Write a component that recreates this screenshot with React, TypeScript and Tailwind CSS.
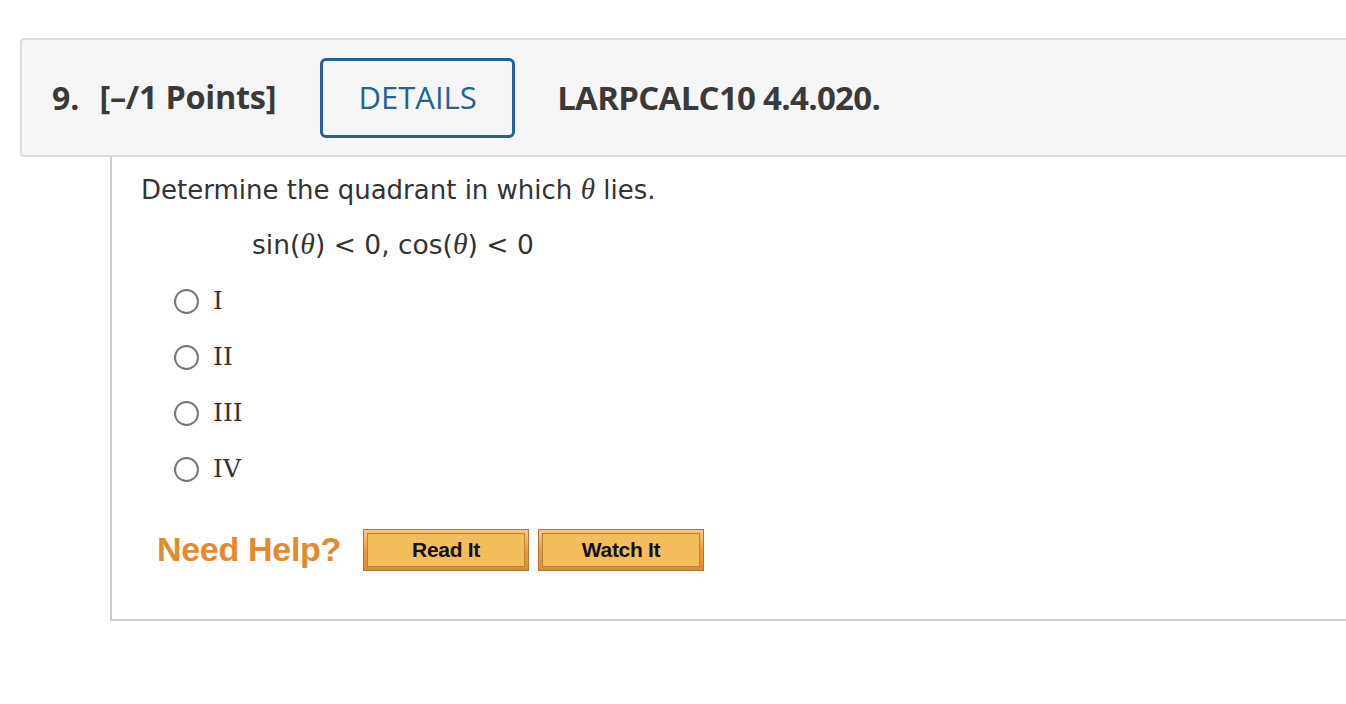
import React from 'react';

const options = ['I', 'II', 'III', 'IV'];

function Theta() {
  return <span className="font-['Liberation_Serif',serif] text-[1.12em] italic">θ</span>;
}

function HelpButton({ label }: { label: string }) {
  return (
    <button className="h-[42px] w-[166px] border border-[#b0763a] bg-gradient-to-b from-[#f7c98a] via-[#ec9a3e] to-[#e48a2f] p-[3px]">
      <span className="flex h-full w-full items-center justify-center border border-[#b8813f] bg-[#f3bd5b] font-['Liberation_Sans',Arial,sans-serif] text-[21px] font-bold tracking-[-0.3px] text-[#111]">
        {label}
      </span>
    </button>
  );
}

export default function App() {
  return (
    <div className="min-h-[704px] w-full overflow-hidden bg-white pl-[20px] pt-[38px]">
      <div className="flex h-[119px] w-[1340px] items-center rounded-l-[4px] border-2 border-r-0 border-[#dcdcdc] bg-[#f6f6f6] pl-[30px] font-['Open_Sans',sans-serif] text-[#3a3a3a]">
        <span className="text-[32px] font-bold">9.</span>
        <span className="ml-[20px] text-[32.5px] font-bold tracking-[-0.3px]">[–/1 Points]</span>
        <div className="ml-[44px] flex h-[80px] w-[195px] items-center justify-center rounded-[6px] border-[3px] border-[#24629a] text-[31px] text-[#24629a]">
          DETAILS
        </div>
        <span className="ml-[42px] text-[33px] font-bold tracking-[-0.7px]">LARPCALC10 4.4.020.</span>
      </div>

      <div className="ml-[90px] h-[464px] w-[1300px] border-b-2 border-l-2 border-[#cccccc] pl-[29px] pt-[16px] text-[#333]">
        <p className="font-['DejaVu_Sans',Verdana,sans-serif] text-[26px] leading-[32px]">
          Determine the quadrant in which <Theta /> lies.
        </p>
        <p className="mt-[22px] pl-[111px] font-['DejaVu_Sans',Verdana,sans-serif] text-[26.5px] leading-[32px]">
          sin(<Theta />) &lt; 0, cos(<Theta />) &lt; 0
        </p>

        <div className="mt-[24px] flex flex-col gap-[24px] pl-[33px]">
          {options.map((o) => (
            <label key={o} className="flex h-[32px] items-center gap-[14px]">
              <span className="h-[25px] w-[25px] rounded-full border-2 border-[#777] bg-white" />
              <span className="font-['DejaVu_Serif',serif] text-[25px] text-[#333]">{o}</span>
            </label>
          ))}
        </div>

        <div className="mt-[39px] flex items-center pl-[16px]">
          <span className="font-['Liberation_Sans',Arial,sans-serif] text-[34px] font-bold tracking-[-0.3px] text-[#e38a2f]">
            Need Help?
          </span>
          <div className="ml-[22px] flex gap-[9px]">
            <HelpButton label="Read It" />
            <HelpButton label="Watch It" />
          </div>
        </div>
      </div>
    </div>
  );
}
